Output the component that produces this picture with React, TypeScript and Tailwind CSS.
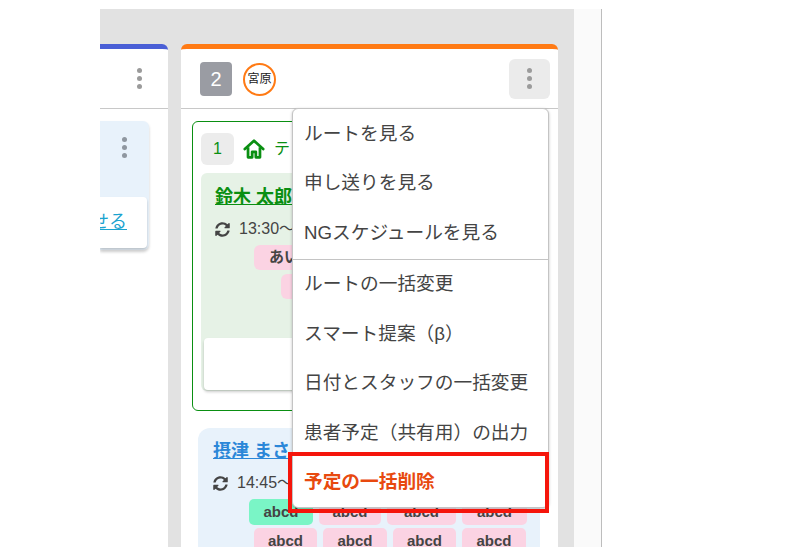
import { FaSyncAlt } from "react-icons/fa";

const font = { fontFamily: '"Liberation Sans", "Noto Sans CJK JP", sans-serif' };

function Kebab({ color = "bg-[#9b9b9b]" }: { color?: string }) {
  return (
    <div className="flex flex-col gap-[3px]">
      <span className={`block h-[5px] w-[5px] rounded-full ${color}`} />
      <span className={`block h-[5px] w-[5px] rounded-full ${color}`} />
      <span className={`block h-[5px] w-[5px] rounded-full ${color}`} />
    </div>
  );
}

function HomeIcon() {
  return (
    <svg viewBox="0 0 24 24" className="h-[22px] w-[22px]" fill="none" stroke="#0a8f12" strokeWidth="3" strokeLinejoin="round">
      <path d="M2 12 12 3l10 9" strokeLinecap="round" />
      <path d="M5.5 10v11h4.5v-6h4v6h4.5V10" />
    </svg>
  );
}

function Tag({ w, green }: { w: string; green?: boolean }) {
  return (
    <div className={`flex h-[26px] items-center justify-center rounded-[5px] text-[15px] font-bold text-[#444] ${w} ${green ? "bg-[#7af5c6]" : "bg-[#fbd3e3]"}`}>
      abcd
    </div>
  );
}

const menuTop = ["ルートを見る", "申し送りを見る", "NGスケジュールを見る"];
const menuBottom = ["ルートの一括変更", "スマート提案（β）", "日付とスタッフの一括変更", "患者予定（共有用）の出力"];

function MenuItem({ label }: { label: string }) {
  return <div className="flex h-[49.5px] items-center whitespace-nowrap pl-[11px] text-[18.7px] text-[#444]">{label}</div>;
}

function ColumnA() {
  return (
    <div className="flex w-[68px] shrink-0 flex-col overflow-hidden rounded-tr-md border-t-[5px] border-[#4a5fd6] bg-white">
      <div className="flex h-[60px] shrink-0 items-center justify-end border-b border-[#c8c8c8] pr-[26px]">
        <Kebab />
      </div>
      <div className="pt-[12px]">
        <div className="h-[129px] w-[49px] overflow-hidden rounded-r-md bg-[#e8f2fb] shadow-[0_2px_3px_rgba(0,0,0,0.2)]">
          <div className="flex h-[50px] items-start justify-end pr-[22px] pt-[16px]">
            <Kebab color="bg-[#8f97a0]" />
          </div>
          <div className="mt-[26px] flex h-[51px] w-[47px] items-center justify-end overflow-hidden rounded-r bg-white pr-[20px] shadow-[0_2px_3px_rgba(0,0,0,0.2)]">
            <span className="whitespace-nowrap text-[18px] text-[#1ba3cf] underline">せる</span>
          </div>
        </div>
      </div>
    </div>
  );
}

function ColumnB() {
  return (
    <div className="relative flex w-[377px] shrink-0 flex-col rounded-t-md border-t-[5px] border-[#ff7a14] bg-white">
      <div className="flex h-[60px] shrink-0 items-center border-b border-[#c8c8c8] pl-[19px] pr-2">
        <div className="mt-[1px] flex h-[34px] w-[32px] items-center justify-center rounded bg-[#9a9ca3] text-[20px] text-white">2</div>
        <div className="ml-[11px] mt-[1px] flex h-[33px] w-[33px] items-center justify-center whitespace-nowrap rounded-full border-2 border-[#ff7a14] text-[12px] text-[#222]">宮原</div>
        <div className="ml-auto flex h-[40px] w-[41px] items-center justify-center rounded-md bg-[#ebebeb]">
          <Kebab />
        </div>
      </div>

      <div className="flex min-h-0 flex-1 flex-col overflow-hidden px-[11px] pt-[12px]">
        <div className="h-[290px] shrink-0 rounded-md border border-[#0a8f12] px-2 pt-[11px]">
          <div className="flex items-center">
            <div className="flex h-[32px] w-[33px] items-center justify-center rounded-md bg-[#ececec] text-[16px] text-[#0a8f12]">1</div>
            <div className="ml-[9px]"><HomeIcon /></div>
            <span className="ml-[9px] text-[16px] text-[#0a8f12]">テ</span>
          </div>
          <div className="mt-2 h-[218px] rounded-md bg-[#e6f2e6] pt-[11px]">
            <div className="pl-[14px] text-[18px] font-bold text-[#0a8f12] underline">鈴木 太郎</div>
            <div className="mt-[7px] flex h-[22px] items-center pl-[14px] text-[16px] text-[#444]">
              <FaSyncAlt className="h-[15px] w-[15px]" />
              <span className="ml-[9px]">13:30〜</span>
            </div>
            <div className="ml-[53px] mt-[5px] flex h-[25px] w-[60px] items-center rounded-md bg-[#fbd3e3] pl-[15px] text-[15px] font-bold text-[#444]">あい</div>
            <div className="ml-[80px] mt-1 h-[25px] w-[40px] rounded-md bg-[#fbd3e3]" />
            <div className="ml-[3px] mt-[39px] h-[52px] rounded-sm bg-white shadow-[0_2px_3px_rgba(0,0,0,0.2)]" />
          </div>
        </div>

        <div className="ml-[6px] mr-[7px] mt-[17px] shrink-0 rounded-t-xl bg-[#e8f2fb] pt-[10px]">
          <div className="pl-[15px] text-[18px] font-bold text-[#2b87d8] underline">摂津 まさ</div>
          <div className="mt-[7px] flex h-[22px] items-center pl-[15px] text-[16px] text-[#444]">
            <FaSyncAlt className="h-[15px] w-[15px]" />
            <span className="ml-[9px]">14:45〜</span>
          </div>
          <div className="ml-[51px] mt-[5px] flex gap-[6px]">
            <Tag w="w-[64px]" green />
            <Tag w="w-[62px]" />
            <Tag w="w-[69px]" />
            <Tag w="w-[65px]" />
          </div>
          <div className="ml-[56px] mt-[3px] flex gap-[6px]">
            <Tag w="w-[63px]" />
            <Tag w="w-[64px]" />
            <Tag w="w-[63px]" />
            <Tag w="w-[64px]" />
          </div>
        </div>
      </div>

      <div className="absolute left-[111px] top-[59px] w-[257px] rounded-md border border-[#c4c4c4] bg-white shadow-[0_1px_3px_rgba(0,0,0,0.25)]">
        {menuTop.map((m) => <MenuItem key={m} label={m} />)}
        <div className="mt-[1px] border-t border-[#c4c4c4]" />
        {menuBottom.map((m) => <MenuItem key={m} label={m} />)}
        <div className="flex h-[49.5px] items-center pl-[11px] text-[18.7px] font-bold text-[#e8490f]">予定の一括削除</div>
        <div className="absolute bottom-[-6px] left-[-5px] right-[-1px] h-[61px] border-4 border-[#f5150b]" />
      </div>
    </div>
  );
}

export default function App() {
  return (
    <div className="flex h-[558px] w-[800px] overflow-hidden bg-white pb-[11px] pl-[100px] pt-[9px]" style={font}>
      <div className="flex w-[474px] shrink-0 gap-[13px] overflow-hidden bg-[#e2e2e2] pt-[35px]">
        <ColumnA />
        <ColumnB />
      </div>
      <div className="w-[28px] shrink-0 border-r border-[#bdbdbd] bg-[#fafafa]" />
    </div>
  );
}
